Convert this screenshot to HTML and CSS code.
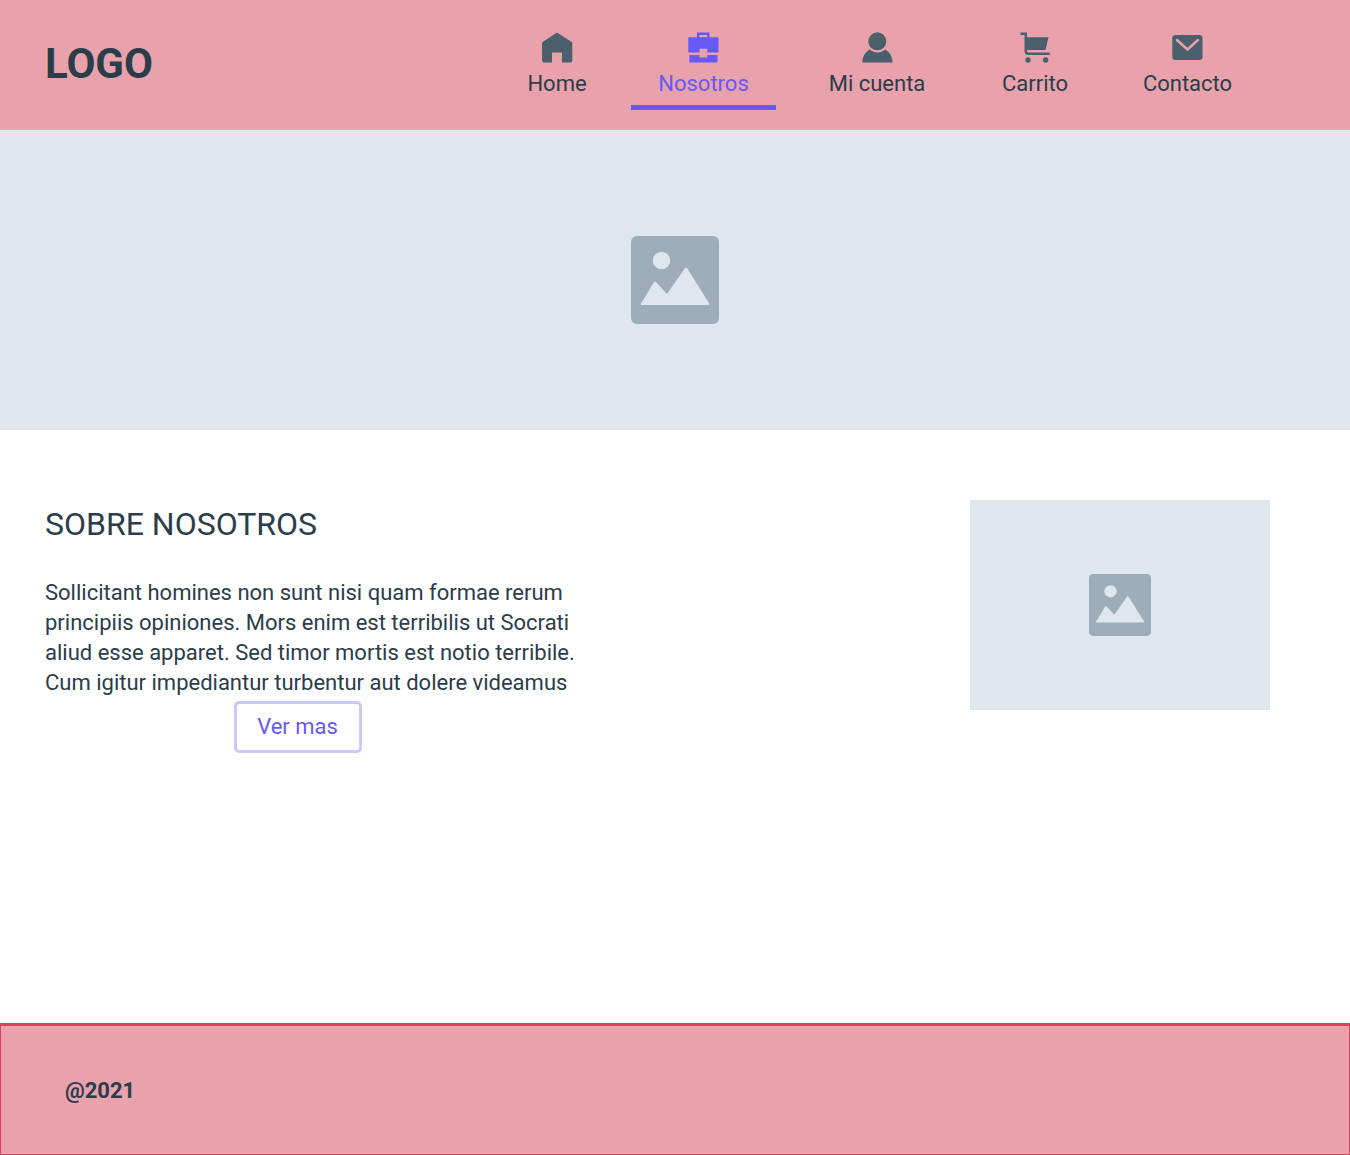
FILE: index.html
```html
<!DOCTYPE html>
<html lang="es">
<head>
<meta charset="utf-8">
<meta name="viewport" content="width=device-width, initial-scale=1">
<title>Sobre nosotros</title>
<link rel="stylesheet" href="styles.css">
</head>
<body>
<header class="header">
  <a class="logo" href="#">LOGO</a>
  <nav class="nav">
    <a class="nav-link" href="#">
      <svg class="icon" viewBox="0 0 32 32" aria-hidden="true"><path d="M16 .5 31.300 10.500V28.500Q31.300 30.500 29.300 30.500H21V20.500H11V30.500H3Q1 30.500 1 28.500V10.500Z"/></svg>
      <span>Home</span>
    </a>
    <a class="nav-link nav-link-active" href="#" aria-current="page">
      <svg class="icon" viewBox="0 0 32 32" aria-hidden="true"><path fill-rule="evenodd" d="M10 .5H22.500V5.300H30.500Q31.500 5.300 31.500 6.300V20.500H20.300V16.700H12.500V20.500H1.300V6.300Q1.300 5.300 2.300 5.300H10ZM12.300 3V5.300H20.300V3ZM2.300 23H12.500V25.500H20.300V23H30.500V29.500Q30.500 30.500 29.500 30.500H3.300Q2.300 30.500 2.300 29.500Z"/></svg>
      <span>Nosotros</span>
    </a>
    <a class="nav-link" href="#">
      <svg class="icon" viewBox="0 0 32 32" aria-hidden="true"><circle cx="16.300" cy="9.300" r="9"/><path d="M8.500 17.500Q16.500 23.500 24.500 17.500Q31.500 22 31.500 30.500H1.300Q1.300 22 8.500 17.500Z"/></svg>
      <span>Mi cuenta</span>
    </a>
    <a class="nav-link" href="#">
      <svg class="icon" viewBox="0 0 32 32" aria-hidden="true"><path d="M1.500 .5H8V5.300H29.500L26.500 18H8V19.500Q8 20.500 9.500 20.500H30.800V23H9.500Q5.500 23 5.500 19.500V3H1.500Z"/><circle cx="9" cy="28" r="2.700"/><circle cx="26.600" cy="28" r="2.700"/></svg>
      <span>Carrito</span>
    </a>
    <a class="nav-link" href="#">
      <svg class="icon" viewBox="0 0 32 32" aria-hidden="true"><rect x="1.300" y="3" width="30.200" height="25" rx="3"/><path class="icon-flap" d="m6 8 10.500 9.500 10.500-9.500"/></svg>
      <span>Contacto</span>
    </a>
  </nav>
</header>
<main>
  <div class="banner">
    <svg class="picture picture-large" viewBox="0 0 88 88" role="img" aria-label="Imagen"><rect class="picture-frame" width="88" height="88" rx="6"/><circle cx="30.500" cy="24.500" r="8.700"/><path d="M11 66 23 46Q24 45 25 46L36 58 54 32Q55 31 56 32L78 67Q79 69 77 69H11Q9 69 10 67Z"/></svg>
  </div>
  <section class="about">
    <div class="about-text">
      <h1 class="title">SOBRE NOSOTROS</h1>
      <p class="copy">Sollicitant homines non sunt nisi quam formae rerum<br>principiis opiniones. Mors enim est terribilis ut Socrati<br>aliud esse apparet. Sed timor mortis est notio terribile.<br>Cum igitur impediantur turbentur aut dolere videamus</p>
      <button class="more" type="button">Ver mas</button>
    </div>
    <div class="thumb">
      <svg class="picture" viewBox="0 0 88 88" role="img" aria-label="Imagen"><rect class="picture-frame" width="88" height="88" rx="6"/><circle cx="30.500" cy="24.500" r="8.700"/><path d="M11 66 23 46Q24 45 25 46L36 58 54 32Q55 31 56 32L78 67Q79 69 77 69H11Q9 69 10 67Z"/></svg>
    </div>
  </section>
</main>
<footer class="footer">@2021</footer>
</body>
</html>
```
FILE: styles.css
```css
* {
  box-sizing: border-box;
}

body {
  display: flex;
  flex-direction: column;
  min-height: 100vh;
  margin: 0;
  background: #fff;
  color: #2b3c4a;
  font: 22px/30px Roboto, "Liberation Sans", sans-serif;
}

main {
  flex: 1;
}

.header {
  display: flex;
  justify-content: space-between;
  align-items: flex-start;
  min-height: 130px;
  padding: 32px 74px 20px 45px;
  background: #e9a1ac;
}

.logo {
  color: inherit;
  font-size: 42px;
  font-weight: 700;
  line-height: 64px;
  text-decoration: none;
}

.nav {
  display: grid;
  grid-template-columns: 134px 159px 188px 128px 177px;
  justify-items: center;
}

.nav-link {
  display: flex;
  flex-direction: column;
  align-items: center;
  gap: 5px;
  padding: 0 27px 6px;
  border-bottom: 5px solid transparent;
  color: inherit;
  text-decoration: none;
  white-space: nowrap;
}

.nav-link-active {
  border-bottom-color: #6759f6;
  color: #6759f6;
}

.icon {
  width: 32px;
  height: 32px;
  fill: #4b5f6d;
}

.nav-link-active .icon {
  fill: currentColor;
}

.icon-flap {
  fill: none;
  stroke: #e9a1ac;
  stroke-width: 2.5;
  stroke-linecap: round;
}

.banner,
.thumb {
  display: grid;
  place-items: center;
  background: #dfe6ed;
}

.banner {
  height: 300px;
}

.picture {
  width: 62px;
  height: 62px;
  fill: #dfe6ed;
}

.picture-large {
  width: 88px;
  height: 88px;
}

.picture-frame {
  fill: #9dadb9;
}

.about {
  display: flex;
  justify-content: space-between;
  align-items: flex-start;
  padding: 70px 80px 70px 45px;
}

.about-text {
  display: flex;
  flex-direction: column;
  width: 505px;
}

.title {
  margin: 0 0 30px;
  font-size: 32px;
  font-weight: 400;
  line-height: 48px;
}

.copy {
  margin: 0 0 3px;
  white-space: nowrap;
}

.more {
  align-self: center;
  width: 128px;
  height: 52px;
  padding: 0;
  border: 3px solid #cdc8fc;
  border-radius: 5px;
  background: #fff;
  color: #6759f6;
  font: inherit;
}

.thumb {
  width: 300px;
  height: 210px;
}

.footer {
  min-height: 132px;
  padding: 50px 64px 48px;
  border: 1px solid #d9455f;
  border-top-width: 3px;
  background: #e9a1ac;
  font-weight: 700;
}
```
